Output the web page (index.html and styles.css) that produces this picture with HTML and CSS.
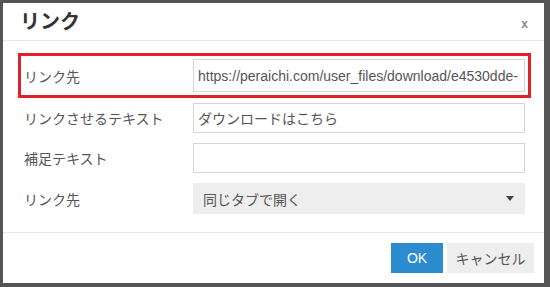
FILE: index.html
```html
<!DOCTYPE html>
<html lang="ja">
<head>
<meta charset="utf-8">
<title>リンク</title>
<link rel="stylesheet" href="styles.css">
</head>
<body>
<div class="dialog">
  <div class="dialog-header">
    <h1 class="dialog-title">リンク</h1>
    <span class="close">x</span>
  </div>
  <div class="dialog-body">
    <div class="row row-highlight">
      <label class="label">リンク先</label>
      <input class="field" type="text" value="https://peraichi.com/user_files/download/e4530dde-">
    </div>
    <div class="rows">
      <div class="row">
        <label class="label">リンクさせるテキスト</label>
        <input class="field" type="text" value="ダウンロードはこちら">
      </div>
      <div class="row">
        <label class="label">補足テキスト</label>
        <input class="field" type="text" value="">
      </div>
      <div class="row">
        <label class="label">リンク先</label>
        <div class="select">
          <span>同じタブで開く</span>
          <span class="caret"></span>
        </div>
      </div>
    </div>
  </div>
  <div class="dialog-footer">
    <button class="btn btn-primary">OK</button>
    <button class="btn btn-default">キャンセル</button>
  </div>
</div>
</body>
</html>
```

FILE: styles.css
```css
* { box-sizing: border-box; }
html, body { margin: 0; height: 100%; }
body {
  background: #555;
  padding: 3px 6px 4px 3px;
  font-family: "Liberation Sans", "Noto Sans CJK JP", sans-serif;
  font-size: 14px;
  color: #555;
}
.dialog {
  background: #fff;
  width: 541px;
  height: 280px;
  display: flex;
  flex-direction: column;
}
.dialog-header {
  height: 38px;
  border-bottom: 1px solid #e5e5e5;
  display: flex;
  align-items: center;
  justify-content: space-between;
  padding: 0 16px 0 17px;
}
.dialog-title {
  margin: 0;
  font-size: 20px;
  font-weight: bold;
  color: #333;
  line-height: 1;
}
.close {
  font-size: 12px;
  font-weight: bold;
  color: #888;
  line-height: 1;
  margin-top: 4px;
}
.dialog-body {
  flex: 1;
  padding: 12px 13px 0 15px;
}
.row {
  display: flex;
  align-items: center;
}
.row-highlight {
  border: 3px solid #e0202a;
  padding: 3px;
}
.row-highlight .field { height: 33px; }
.rows {
  margin: 5px 3px 0 3px;
  padding: 0 3px;
  display: flex;
  flex-direction: column;
  gap: 10px;
}
.label {
  width: 169px;
  flex: none;
  color: #555;
}
.field {
  flex: 1;
  min-width: 0;
  height: 30px;
  border: 1px solid #d5d5d5;
  padding: 0 4px;
  font: inherit;
  color: #555;
  background: #fff;
  outline: none;
}
.select {
  flex: 1;
  height: 31px;
  background: #eee;
  display: flex;
  align-items: center;
  justify-content: space-between;
  padding: 0 11px 0 10px;
  color: #555;
}
.caret {
  width: 0;
  height: 0;
  border-left: 4px solid transparent;
  border-right: 4px solid transparent;
  border-top: 5px solid #444;
}
.dialog-footer {
  height: 51px;
  border-top: 1px solid #e5e5e5;
  display: flex;
  justify-content: flex-end;
  align-items: center;
  gap: 4px;
  padding: 0 10px;
}
.btn {
  height: 30px;
  border: none;
  font: inherit;
  font-size: 14px;
  padding: 0;
  cursor: pointer;
}
.btn-primary {
  width: 52px;
  background: #2d8bcf;
  color: #fff;
}
.btn-default {
  width: 87px;
  background: #eee;
  color: #555;
}
```
